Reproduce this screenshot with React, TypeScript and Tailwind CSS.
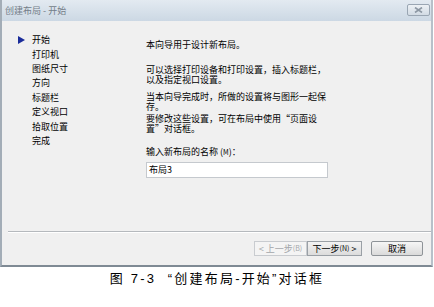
import React from 'react'

const navItems = ['开始', '打印机', '图纸尺寸', '方向', '标题栏', '定义视口', '拾取位置', '完成']

const font = "font-['Noto_Sans_CJK_SC',sans-serif]"

export default function App() {
  return (
    <div className={`w-[434px] h-[307px] bg-white ${font} text-[9px] text-black`}>
      <div className="w-[433px] h-[267px] border-x-2 border-b-2 border-l-[#a3adb7] border-r-[#b7c0c9] border-b-[#7f8a94] bg-[#f0f0f0] flex flex-col">
        {/* title bar */}
        <div className="h-[21px] flex items-center justify-between pl-[3px] pr-[1px] bg-gradient-to-b from-[#e3eaf1] to-[#ccd8e4]">
          <span className="text-[#737d88] leading-none">创建布局 - 开始</span>
          <div className="w-[23px] h-[12px] mb-[1px] border border-[#9aa6b3] rounded-[2px] bg-gradient-to-b from-[#edf1f5] to-[#d2dbe4] flex items-center justify-center">
            <svg width="9" height="6" viewBox="0 0 9 6">
              <path d="M1 0.5 L8 5.5 M8 0.5 L1 5.5" stroke="#8c97a3" strokeWidth="1.6" />
            </svg>
          </div>
        </div>

        <div className="flex-1 flex">
          {/* left steps */}
          <div className="w-[144px] pt-[12px] pl-[16px]">
            {navItems.map((item, i) => (
              <div key={item} className="h-[14.4px] flex items-center leading-[14px]">
                <span className="w-[14px] flex items-center">
                  {i === 0 && (
                    <svg width="7" height="8" viewBox="0 0 7 8">
                      <path d="M0 0 L7 4 L0 8 Z" fill="#1a2c9a" />
                    </svg>
                  )}
                </span>
                <span>{item}</span>
              </div>
            ))}
          </div>

          {/* right text */}
          <div className="flex-1 pt-[19px] leading-[10px]">
            <p>本向导用于设计新布局。</p>
            <p className="mt-[15px]">可以选择打印设备和打印设置，插入标题栏，<br />以及指定视口设置。</p>
            <p className="mt-[7px]">当本向导完成时，所做的设置将与图形一起保<br />存。</p>
            <p className="mt-[2px]">要修改这些设置，可在布局中使用“页面设<br />置”对话框。</p>
            <p className="mt-[13px]">输入新布局的名称 (<span className="text-[7px]">M</span>)：</p>
            <div className="mt-[5px] w-[182px] h-[16px] bg-white border border-[#c5c9ce] flex items-center px-[2px]">布局3</div>
          </div>
        </div>

        {/* footer */}
        <div className="ml-[6px] border-t border-b border-t-[#b5b9bd] border-b-white" />
        <div className="h-[32px] flex items-start justify-end pt-[8px] pr-[8px]">
          <div className="w-[53px] h-[15px] border border-[#c9ccd0] bg-[#f4f4f4] text-[#a3a6aa] flex items-center justify-center leading-none">&lt; 上一步<span className="text-[7px]">(B)</span></div>
          <div className="w-[55px] h-[15px] border border-[#9aa0a6] bg-gradient-to-b from-[#f3f3f3] to-[#dcdcdc] flex items-center justify-center leading-none">下一步<span className="text-[7px]">(N)</span>&nbsp;&gt;</div>
          <div className="ml-[9px] w-[52px] h-[15px] border border-[#8e9398] rounded-[2px] bg-gradient-to-b from-[#f6f6f6] to-[#dadada] flex items-center justify-center leading-none">取消</div>
        </div>
      </div>

      <div className="h-[24px] flex items-center justify-center font-['Liberation_Sans','Noto_Sans_CJK_SC',sans-serif] text-[13px] tracking-[2.2px]">
        图 7-3&nbsp;&nbsp;“创建布局-开始”对话框
      </div>
    </div>
  )
}
